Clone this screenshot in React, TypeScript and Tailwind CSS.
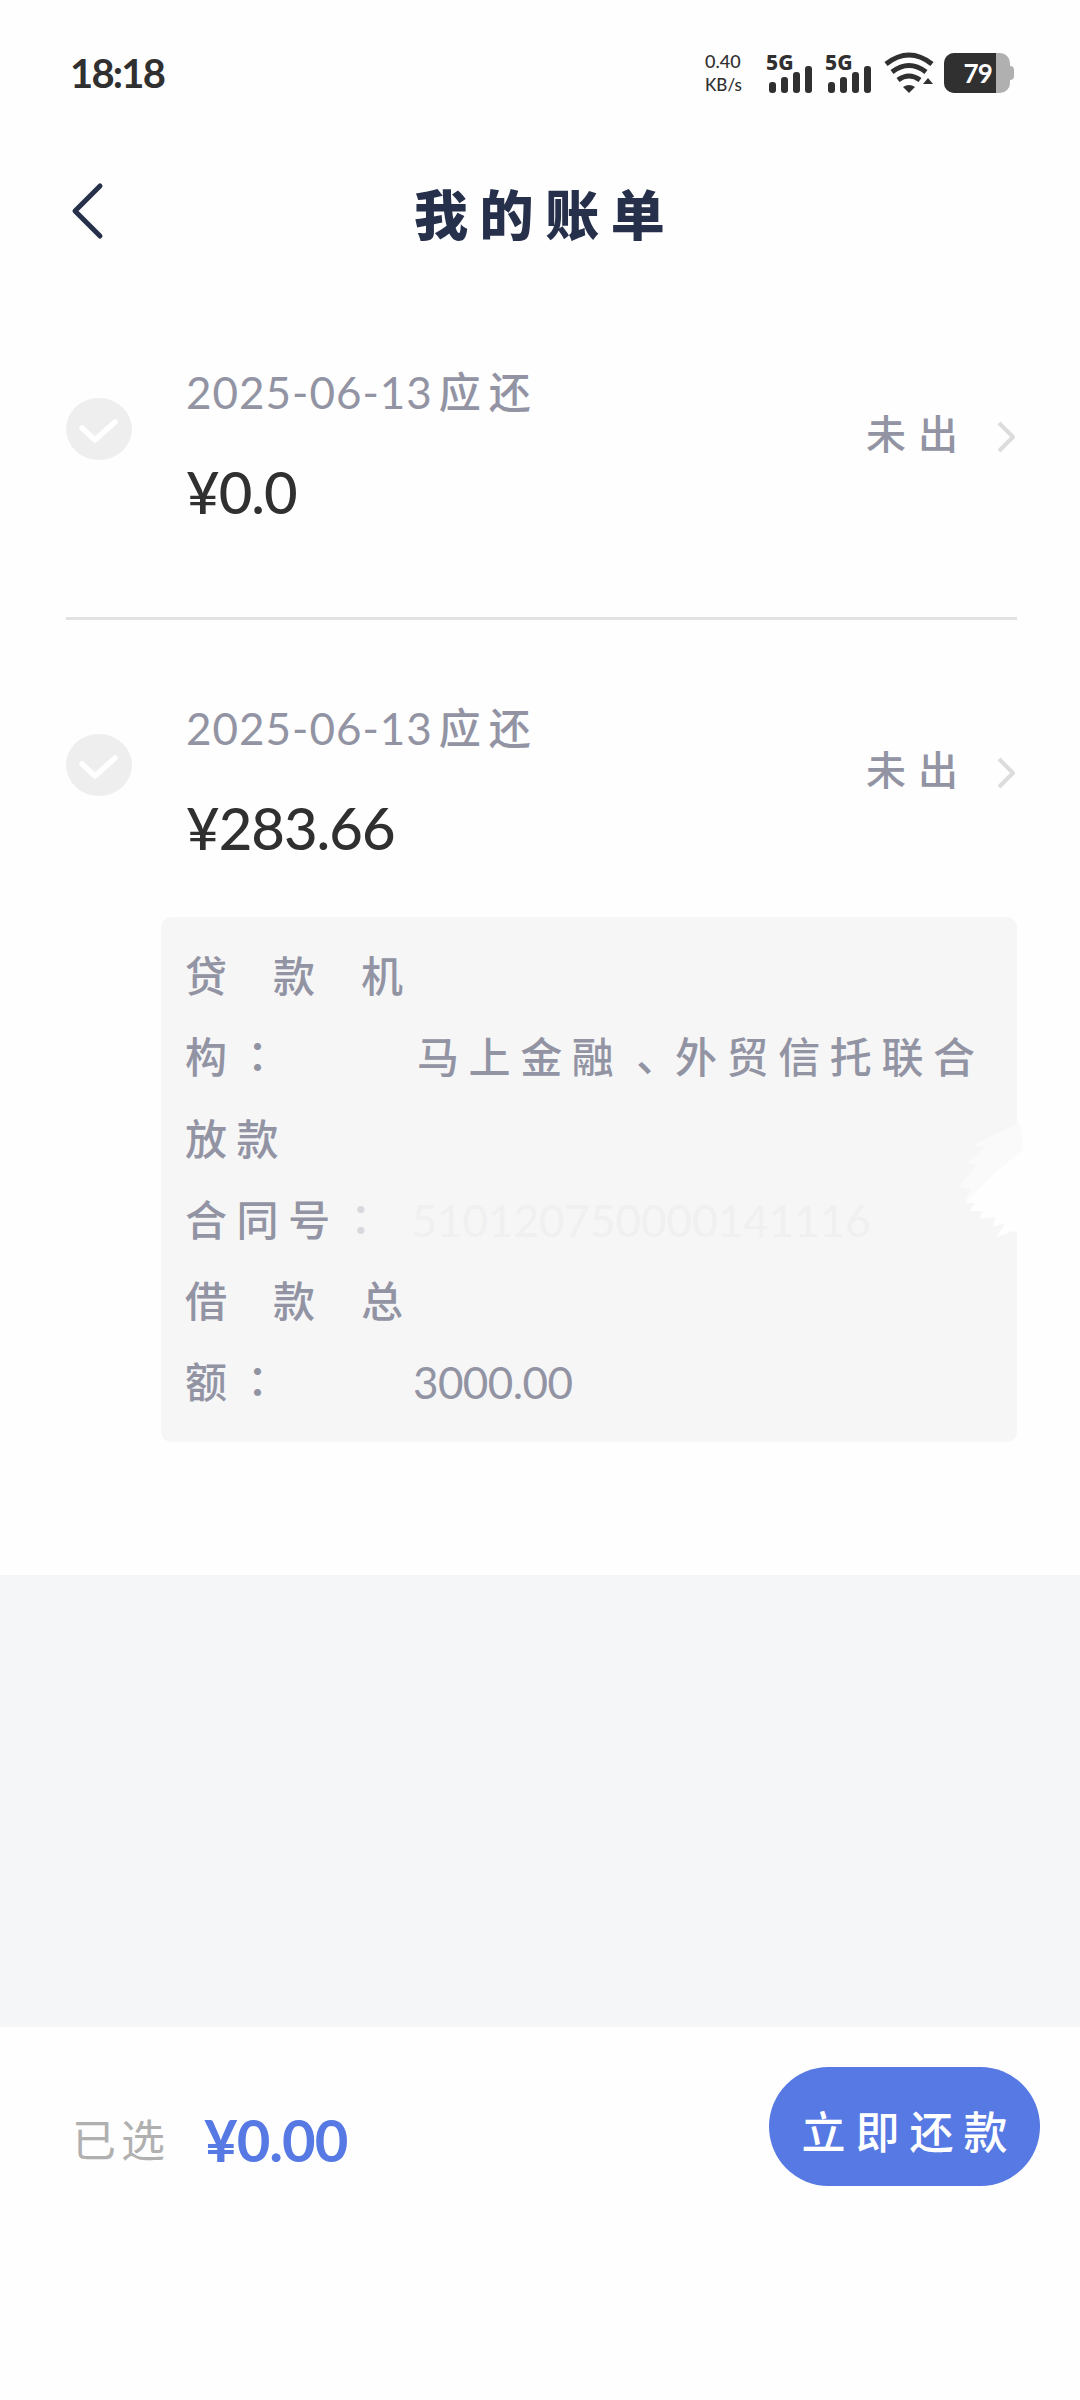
import React from "react";

const bills = [
  { id: 1, date: "2025-06-13", amount: "0.0", status: "未出" },
  { id: 2, date: "2025-06-13", amount: "283.66", status: "未出" },
];

export default function App() {
  return (
    <div className="w-[1080px] h-[2400px] flex flex-col bg-[#fefefe] font-[Lato,'Noto_Sans_CJK_SC',sans-serif] overflow-hidden">
      <StatusBar />

      <header className="h-[132px] flex items-center pl-[70px]">
        <svg width="36" height="60" viewBox="0 0 36 60" fill="none">
          <path
            d="M30 5L5 30L30 55"
            stroke="#27304b"
            strokeWidth="5"
            strokeLinecap="round"
            strokeLinejoin="round"
          />
        </svg>
        <h1 className="flex-1 pl-[308px] pt-[9px] text-[54px] leading-none font-black tracking-[11.6px] text-[#27304b]">
          我的账单
        </h1>
      </header>

      <main className="h-[1298px] shrink-0 pt-[7px] pl-[66px] pr-[63px]">
        <div className="h-[336px] border-b-[3px] border-[#e2e2e2]">
          <BillRow bill={bills[0]} />
        </div>
        <BillRow bill={bills[1]} />
        <LoanDetail />
      </main>

      <div className="h-[452px] shrink-0 bg-[#f5f6f8]" />

      <footer className="flex items-center justify-between h-[199px] pl-[72px] pr-[40px]">
        <div className="flex items-center pt-[26px]">
          <span className="text-[44px] tracking-[5px] text-[#b0b0b0]">
            已选
          </span>
          <span className="ml-[34px] text-[58px] leading-none font-bold tracking-[-1px] text-[#5679e3]">
            ¥0.00
          </span>
        </div>
        <button className="w-[271px] h-[119px] rounded-full bg-[#5679e3] text-white text-[44px] font-medium tracking-[10px] pl-[10px] pt-[10px]">
          立即还款
        </button>
      </footer>
    </div>
  );
}

function BillRow({ bill }: { bill: any }) {
  return (
    <div className="flex h-[297px] pt-[75px]">
      <CheckMark />
      <div className="ml-[54px] flex-1">
        <p className="flex items-center h-[66px] text-[44px] tracking-[1px] text-[#9294a4]">
          {bill.date}
          <span className="ml-[6px] tracking-[8px] text-[42px] font-medium">
            应还
          </span>
        </p>
        <p className="mt-[21px] h-[90px] flex items-center text-[58px] font-medium tracking-[-1px] text-[#303030]">
          ¥{bill.amount}
        </p>
      </div>
      <div className="flex items-center h-[66px] mt-[42px]">
        <span className="text-[40px] font-medium tracking-[12px] text-[#9294a4]">
          {bill.status}
        </span>
        <svg
          className="ml-[27px] mt-[5px]"
          width="20"
          height="32"
          viewBox="0 0 20 32"
          fill="none"
        >
          <path
            d="M2 2L16 16L2 30"
            stroke="#dcdcdc"
            strokeWidth="4"
            strokeLinejoin="round"
          />
        </svg>
      </div>
    </div>
  );
}

function CheckMark() {
  return (
    <svg
      className="mt-[39px]"
      width="66"
      height="62"
      viewBox="0 0 66 62"
      fill="none"
    >
      <ellipse cx="33" cy="31" rx="33" ry="31" fill="#eeeeee" />
      <path
        d="M16 30L29 42L49 24"
        stroke="#ffffff"
        strokeWidth="5.5"
        strokeLinecap="round"
        strokeLinejoin="round"
      />
    </svg>
  );
}

// full-width punctuation sits in the middle of its box in the TC face
function Mark({ children }: { children: React.ReactNode }) {
  return (
    <span className="leading-none font-['Noto_Sans_CJK_TC',sans-serif]">
      {children}
    </span>
  );
}

function LoanDetail() {
  return (
    <div className="relative ml-[95px] w-[856px] h-[525px] rounded-[10px] bg-[#f6f6f7] pt-[19px] pl-[24px] text-[42px] font-medium leading-[81.3px] tracking-[9.6px] text-[#9294a4]">
      <p className="h-[81.3px] tracking-[46px]">贷款机</p>
      <p className="flex h-[81.3px]">
        <span className="w-[232px]">
          构<Mark>：</Mark>
        </span>
        <span>
          马上金融
          <span className="inline-block translate-y-[11px]">
            <Mark>、</Mark>
          </span>
          外贸信托联合
        </span>
      </p>
      <p className="h-[81.3px]">放款</p>
      <p className="flex h-[81.3px]">
        <span>合同号</span>
        <span className="text-[#d8d8dc]">
          <Mark>：</Mark>
        </span>
        <span className="ml-[20px] text-[44px] font-normal tracking-normal text-[#f0f0f1]">
          510120750000141116
        </span>
      </p>
      <p className="h-[81.3px] tracking-[46px]">借款总</p>
      <p className="flex h-[81.3px]">
        <span className="w-[228px]">
          额<Mark>：</Mark>
        </span>
        <span className="text-[44px] font-normal tracking-[-0.6px]">
          3000.00
        </span>
      </p>
      <Smudge />
    </div>
  );
}

// white brush stroke over the right edge of the card
function Smudge() {
  return (
    <svg
      className="absolute right-[-38px] top-[202px]"
      width="100"
      height="160"
      viewBox="0 0 100 160"
    >
      <path
        d="M64 4L18 26L30 28L12 44L22 46L4 68L16 70L10 82L70 76L78 20Z"
        fill="#fafafa"
      />
      <path
        d="M66 4L68 30L52 44L42 52L28 66L10 84L20 84L14 92L28 92L24 100L40 98L38 108L50 104L42 118L58 112L68 116L70 140L76 120L96 90L88 50L70 0Z"
        fill="#fefefe"
      />
    </svg>
  );
}

function StatusBar() {
  return (
    <div className="flex items-center h-[145px] shrink-0 pl-[70px] pr-[66px] text-[#303030]">
      <span className="flex-1 text-[40px] font-bold tracking-[-1.8px]">
        18:18
      </span>
      <div className="flex flex-col w-[61px] text-[17px] leading-[23px] font-medium">
        <span className="text-[18px]">0.40</span>
        <span>KB/s</span>
      </div>
      <Signal />
      <Signal />
      <svg
        width="50"
        height="42"
        viewBox="0 0 50 42"
        fill="none"
        stroke="#303030"
      >
        <path d="M2 12Q25 -6 48 12" strokeWidth="5" />
        <path d="M8 20Q25 7 42 20" strokeWidth="5" />
        <path d="M14 28Q25 20 36 28" strokeWidth="5" />
        <path d="M19 35Q25 31 31 35L25 41Z" fill="#303030" stroke="none" />
        <path d="M39 32L44 26L49 32Z" fill="#303030" stroke="none" />
      </svg>
      <div className="flex items-center ml-[10px]">
        <div className="flex w-[66px] h-[40px] rounded-[10px] overflow-hidden bg-[#b0b0b0]">
          <div className="w-[52px] bg-[#303030] text-white text-[26px] font-bold tracking-[-0.8px] leading-[40px] text-right pr-[4px]">
            79
          </div>
        </div>
        <div className="w-[4px] h-[14px] bg-[#b0b0b0] rounded-r" />
      </div>
    </div>
  );
}

function Signal() {
  return (
    <div className="relative w-[48px] h-[42px] mr-[11px]">
      <svg width="48" height="42" viewBox="0 0 48 42" fill="#303030">
        <rect x="3" y="30" width="7" height="11" rx="3" />
        <rect x="15" y="25" width="7" height="16" rx="3" />
        <rect x="27" y="20" width="7" height="21" rx="3" />
        <rect x="39" y="14" width="7" height="27" rx="3" />
      </svg>
      <span className="absolute left-0 top-[-4px] text-[21px] leading-[28px] font-extrabold font-['Noto_Sans',sans-serif]">
        5G
      </span>
    </div>
  );
}
